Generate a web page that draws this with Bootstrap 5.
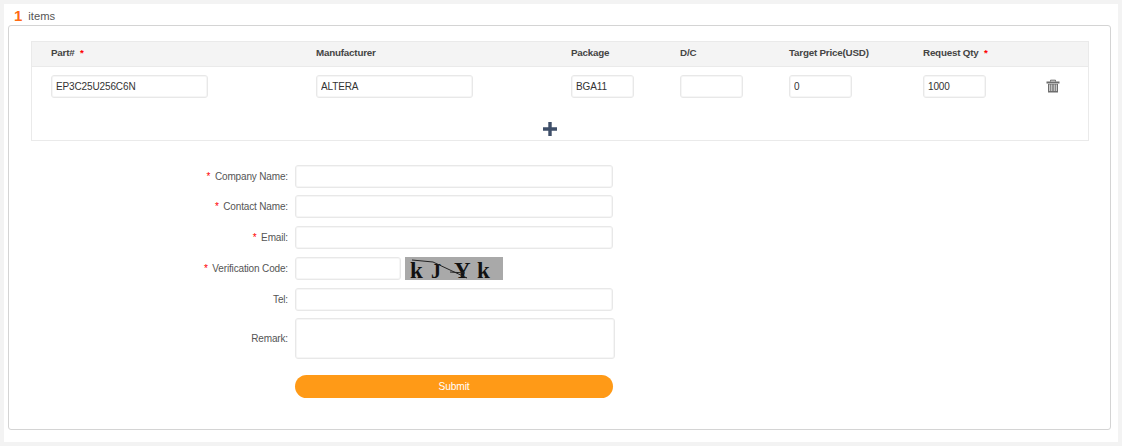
<!DOCTYPE html>
<html lang="en">
<head>
<meta charset="utf-8">
<title>Items</title>
<link rel="stylesheet" href="https://cdn.jsdelivr.net/npm/bootstrap@5.3.0/dist/css/bootstrap.min.css">
<style>
html,body{height:100%;}
body{background:#f3f3f3;font-family:"Liberation Sans",Arial,sans-serif;font-size:10px;color:#555;overflow:hidden;}
.sheet{margin:4px 4px 4px 4px;height:438px;background:#fff;padding:0 7px 0 4px;}
.count-line{height:21px;display:flex;align-items:center;padding-left:6px;font-size:11.2px;color:#555;padding-top:4px;}
.count-num{color:#ff6a13;font-weight:700;font-size:15px;margin-right:6px;}
.outer-box{height:405px;border:1px solid #d4d4d4;border-radius:3px;padding:15px 21px 0 22px;}
.items-box{height:100px;border:1px solid #eaeaea;}
.items-table{table-layout:fixed;width:100%;margin:0;}
.items-table th{height:24px;background:#f4f4f4;padding:0 0 0 19px;font-size:9.8px;letter-spacing:-.2px;font-weight:700;color:#444;vertical-align:middle;border:0;border-bottom:1px solid #eaeaea;}
.items-table td{padding:8px 0 24px 19px;border:0;vertical-align:top;}
.req{color:#f00;margin:0 2px 0 3px;}
.field{display:block;height:23px;padding:0 4px;font-size:10px;letter-spacing:-.13px;color:#333;border:1px solid #e8e8e8;border-radius:3px;box-shadow:inset 0 0 0 1px #f6f6f6;min-height:0;}
.field:focus{box-shadow:none;}
.w-part{width:157px;}
.w-small{width:63px;}
.trash{display:block;margin-top:4px;}
.add-wrap{height:14px;text-align:center;padding-right:20px;line-height:0;}
.form-area{margin-top:23.6px;}
.f-row{display:flex;align-items:center;gap:7px;margin-bottom:7.75px;}
.f-label{width:257px;text-align:right;font-size:10px;letter-spacing:-.15px;color:#555;margin:0;flex:none;}
.f-wide{width:318px;}
.f-code{width:106px;}
.f-area{width:320px;height:41px;resize:none;}
.captcha{display:block;margin-left:-3px;overflow:visible;}
.send-btn{width:318px;height:23px;border:0;border-radius:12px;background:#ff9a17;color:#fff;font-size:10.2px;letter-spacing:-.1px;padding:0;}
.send-btn:hover{background:#ff9a17;color:#fff;}
.btn-row{padding-left:264px;margin-top:15.7px;}
</style>
</head>
<body>
<div class="sheet">
  <div class="count-line"><span class="count-num">1</span><span>items</span></div>
  <div class="outer-box">
    <div class="items-box">
      <table class="table items-table">
        <colgroup><col style="width:265px"><col style="width:255px"><col style="width:109px"><col style="width:109px"><col style="width:134px"><col style="width:123px"><col></colgroup>
        <thead><tr><th>Part#<span class="req"> *</span></th><th>Manufacturer</th><th>Package</th><th>D/C</th><th>Target Price(USD)</th><th>Request Qty<span class="req"> *</span></th><th></th></tr></thead>
        <tbody><tr>
          <td><input class="form-control field w-part" value="EP3C25U256C6N"></td>
          <td><input class="form-control field w-part" value="ALTERA"></td>
          <td><input class="form-control field w-small" value="BGA11"></td>
          <td><input class="form-control field w-small"></td>
          <td><input class="form-control field w-small" value="0"></td>
          <td><input class="form-control field w-small" value="1000"></td>
          <td><svg class="trash" width="14" height="14" viewBox="0 0 14 14"><path d="M4.500 2.500V1.200h5v1.300" fill="none" stroke="#666"/><rect x="0.500" y="2.500" width="13" height="2" fill="#6d6d6d"/><path d="M2 5h10v8.500H2z" fill="#6d6d6d"/><path d="M3 5.500h1.300V12H3zM5.100 5.500h1.300V12H5.100zM7.600 5.500h1.300V12H7.600zM9.700 5.500H11V12H9.700z" fill="#c9c9c9"/></svg></td>
        </tr></tbody>
      </table>
      <div class="add-wrap"><svg width="14" height="14" viewBox="0 0 14 14"><path d="M5.300 0h3.400v5.300H14v3.400H8.700V14H5.300V8.700H0V5.300h5.300z" fill="#3f4f69"/></svg></div>
    </div>
    <div class="form-area">
      <div class="f-row"><label class="f-label"><span class="req">*</span> Company Name:</label><input class="form-control field f-wide"></div>
      <div class="f-row"><label class="f-label"><span class="req">*</span> Contact Name:</label><input class="form-control field f-wide"></div>
      <div class="f-row"><label class="f-label"><span class="req">*</span> Email:</label><input class="form-control field f-wide"></div>
      <div class="f-row"><label class="f-label"><span class="req">*</span> Verification Code:</label><input class="form-control field f-code">
        <svg class="captcha" width="98" height="23" viewBox="0 0 98 23"><rect width="98" height="23" fill="#a9a9a9"/><text x="5" y="21" font-family="Liberation Serif" font-weight="700" font-size="23" fill="#111">k</text><text x="26" y="21" font-family="Liberation Serif" font-weight="700" font-size="20" fill="#111">J</text><text x="49" y="21" font-family="Liberation Serif" font-weight="700" font-size="23" fill="#111">Y</text><text x="72" y="21" font-family="Liberation Serif" font-weight="700" font-size="23" fill="#111">k</text><path d="M7 3l21 2 34 16M45 15l15 1" stroke="#222" stroke-width="1" fill="none"/></svg></div>
      <div class="f-row"><label class="f-label">Tel:</label><input class="form-control field f-wide"></div>
      <div class="f-row"><label class="f-label">Remark:</label><textarea class="form-control field f-area"></textarea></div>
      <div class="btn-row"><button type="button" class="btn send-btn">Submit</button></div>
    </div>
  </div>
</div>
<script src="https://cdn.jsdelivr.net/npm/bootstrap@5.3.0/dist/js/bootstrap.bundle.min.js"></script>
</body>
</html>
